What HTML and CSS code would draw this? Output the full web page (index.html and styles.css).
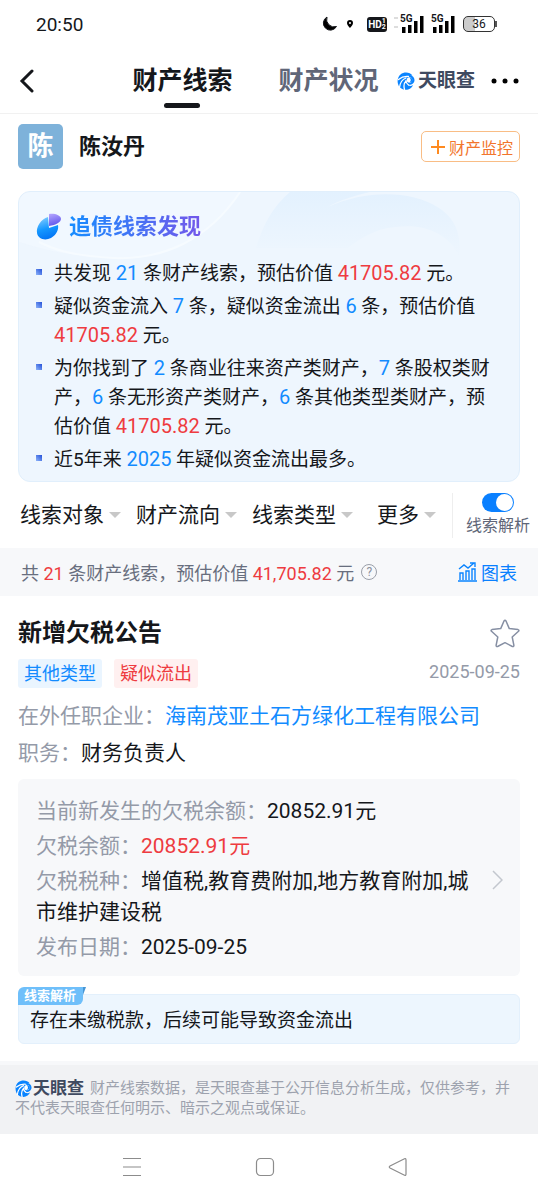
FILE: index.html
```html
<!DOCTYPE html>
<html lang="zh-CN">
<head>
<meta charset="utf-8">
<meta name="viewport" content="width=device-width, initial-scale=1">
<title>财产线索</title>
<link rel="stylesheet" href="styles.css">
</head>
<body>
<svg class="defs" aria-hidden="true">
  <symbol id="swirl" viewBox="0 0 36 36">
    <path fill="#0a84ff" d="M31 7C26 0 14-1 7 5 0 11-1 23 6 31 16 40 29 35 32 26c-4 3-9 2-11-1 7 2 14-2 14-9 0-5-4-9-9-9z"/>
    <path fill="none" stroke="#fff" stroke-width="2.600" stroke-linecap="round" d="M3 15c6-5 12-7 20-6M5 31c1-9 5-16 13-19M15 35c-2-7-1-13 3-17M18 17c0 4 2 7 5 9"/>
    <circle cx="25" cy="16" r="5.500" fill="#fff"/>
    <path fill="#0a84ff" d="M24 21c5 0 8-2 7-6-1-3-4-4-6-4 2 2 5 7-1 10z"/>
  </symbol>
</svg>

<div class="status">
  <time>20:50</time>
  <div class="status-icons">
    <svg width="15" height="16" viewBox="0 0 15 16"><path d="M5 1a7 7 0 1 0 9.500 9.500A7.500 7.500 0 0 1 5 1z" stroke="#15171b" stroke-linejoin="round"/></svg>
    <svg class="pin" width="6" height="8" viewBox="0 0 6 8"><path fill-rule="evenodd" d="M3 0a3 3 0 0 1 3 3c0 2-3 5-3 5S0 5 0 3a3 3 0 0 1 3-3zm0 2a1 1 0 1 0 0 2 1 1 0 0 0 0-2z"/></svg>
    <span class="hd">HD<span class="sup"><i>1</i><i>2</i></span></span>
    <span class="signal updown"><svg width="22" height="17" viewBox="0 0 22 17"><path d="M0 11h3.500v6H0zM6 9h3.500v8H6zM12 5h3.500v12H12zM18 0h3.500v17H18z"/></svg><b>5G</b></span>
    <span class="signal"><svg width="22" height="17" viewBox="0 0 22 17"><path d="M0 11h3.500v6H0zM6 9h3.500v8H6zM12 5h3.500v12H12zM18 0h3.500v17H18z"/></svg><b>5G</b></span>
    <span class="battery">36</span>
  </div>
</div>

<header class="nav">
  <button class="back" aria-label="返回"><svg width="16" height="24" viewBox="0 0 16 24"><path d="M13 2 3 12l10 10" fill="none" stroke="#15171b" stroke-width="3" stroke-linecap="round"/></svg></button>
  <nav class="tabs">
    <a class="tab active" href="#clues">财产线索</a>
    <a class="tab" href="#state">财产状况</a>
  </nav>
  <span class="brand"><svg class="brand-icon"><use href="#swirl"/></svg>天眼查</span>
  <button class="dots" aria-label="更多操作"><svg width="28" height="6" viewBox="0 0 28 6"><circle cx="3" cy="3" r="2.500"/><circle cx="14" cy="3" r="2.500"/><circle cx="25" cy="3" r="2.500"/></svg></button>
</header>

<section class="person">
  <span class="avatar">陈</span>
  <h1>陈汝丹</h1>
  <button class="monitor"><svg width="14" height="14" viewBox="0 0 14 14"><path d="M7 0v14M0 7h14" stroke="#ff8a1f" stroke-width="2"/></svg>财产监控</button>
</section>

<section class="found" id="clues">
  <svg class="found-art" viewBox="0 0 502 80" preserveAspectRatio="none" aria-hidden="true">
    <defs><linearGradient id="fade" x1="0" y1="0" x2="0" y2="1"><stop offset="0" stop-color="#e3f1fe"/><stop offset="1" stop-color="#eef6fe"/></linearGradient></defs>
    <path d="M0 0h222C190 48 145 68 95 66 50 64 25 58 0 50z" fill="#f4faff" opacity=".5"/>
    <path d="M222 0C190 48 145 68 95 66 60 64 40 60 20 50" fill="none" stroke="#f6fbff" stroke-width="2"/>
    <path d="M238 56C246 30 256 14 272 0h80c-16 4-30 8-42 15 40-18 84-16 110 0 20 12 24 30 22 50-10-24-36-34-64-30-22 2-36 12-48 21z" fill="url(#fade)"/>
  </svg>
  <h2><svg width="26" height="28" viewBox="0 0 26 28">
    <defs>
      <linearGradient id="pie" x1="0" y1="0" x2=".3" y2="1"><stop offset="0" stop-color="#8fd3ff"/><stop offset=".6" stop-color="#1497ff"/><stop offset="1" stop-color="#0578f5"/></linearGradient>
      <linearGradient id="slice" x1="0" y1="0" x2=".3" y2="1"><stop offset="0" stop-color="#b7a8ff"/><stop offset="1" stop-color="#6257ec"/></linearGradient>
    </defs>
    <path d="M12 4C5 6 0 14 1 20c1 6 8 8 14 5 5-3 8-8 7-13l-9 3z" fill="url(#pie)"/>
    <path d="M13 1c5-1 12 1 12 5 0 3-5 6-12 7z" fill="url(#slice)"/>
  </svg><span>追债线索发现</span></h2>
  <ul>
    <li>共发现 <em>21</em> 条财产线索，预估价值 <strong>41705.82</strong> 元。</li>
    <li>疑似资金流入 <em>7</em> 条，疑似资金流出 <em>6</em> 条，预估价值 <strong>41705.82</strong> 元。</li>
    <li>为你找到了 <em>2</em> 条商业往来资产类财产，<em>7</em> 条股权类财产，<em>6</em> 条无形资产类财产，<em>6</em> 条其他类型类财产，预估价值 <strong>41705.82</strong> 元。</li>
    <li>近5年来 <em>2025</em> 年疑似资金流出最多。</li>
  </ul>
</section>

<section class="filters">
  <div class="filter-list">
    <button class="filter">线索对象</button>
    <button class="filter">财产流向</button>
    <button class="filter">线索类型</button>
    <button class="filter">更多</button>
  </div>
  <label class="toggle"><input type="checkbox" role="switch" checked><span>线索解析</span></label>
</section>

<section class="summary">
  <p>共 <strong>21</strong> 条财产线索，预估价值 <strong>41,705.82</strong> 元</p>
  <button class="help" aria-label="说明">?</button>
  <a class="chart" href="#chart"><svg width="19" height="20" viewBox="0 0 19 20" fill="none" stroke="#0a84ff" stroke-width="1.400"><path d="M0 19h19M2 18v-7h3v7M8 18V9h3v9M14 18V7h3v11M1 7l5-4 4 3 6-5M12 1h5v4"/></svg>图表</a>
</section>

<main class="clue">
  <div class="title-row">
    <h2>新增欠税公告</h2>
    <button aria-label="收藏"><svg width="30" height="29" viewBox="0 0 30 29"><path d="M14 2q1-1.500 2 0l3.300 7.600 8.700 1q1.500.5.500 1.700L22.200 18l1.700 8.300q0 1.700-1.500 1.200L15 23.700l-7.400 3.800q-1.500.5-1.500-1.200L7.800 18l-6.300-5.700q-1-1.200.500-1.700l8.700-1z" fill="none" stroke="#868fa3" stroke-width="1.500" stroke-linejoin="round"/></svg></button>
  </div>
  <div class="tags">
    <span class="tag blue">其他类型</span>
    <span class="tag red">疑似流出</span>
    <time>2025-09-25</time>
  </div>
  <p class="field"><span>在外任职企业：</span><a href="#company">海南茂亚土石方绿化工程有限公司</a></p>
  <p class="field"><span>职务：</span>财务负责人</p>

  <div class="detail">
    <div>
      <p><span>当前新发生的欠税余额：</span>20852.91元</p>
      <p><span>欠税余额：</span><strong>20852.91元</strong></p>
      <p><span>欠税税种：</span>增值税,教育费附加,地方教育附加,城市维护建设税</p>
      <p><span>发布日期：</span>2025-09-25</p>
    </div>
    <svg width="11" height="20" viewBox="0 0 11 20"><path d="M1 1l9 9-9 9" fill="none" stroke="#c3c7ce" stroke-width="1.500"/></svg>
  </div>

  <div class="analysis">
    <span class="label">线索解析</span>
    <p>存在未缴税款，后续可能导致资金流出</p>
  </div>
</main>

<footer class="note">
  <p><span class="brand small"><svg class="brand-icon"><use href="#swirl"/></svg>天眼查</span>财产线索数据，是天眼查基于公开信息分析生成，仅供参考，并不代表天眼查任何明示、暗示之观点或保证。</p>
</footer>

<div class="system">
  <button aria-label="菜单"><svg width="20" height="20" viewBox="0 0 20 20"><path d="M1 1.500h18M1 10h18M1 18.500h18"/></svg></button>
  <button aria-label="主页"><svg width="20" height="20" viewBox="0 0 20 20"><rect x="1.500" y="1.500" width="17" height="17" rx="4"/></svg></button>
  <button aria-label="后退"><svg width="20" height="20" viewBox="0 0 20 20"><path d="M16.500 1.700 2 9q-1.500 1 0 2l14.500 7.300q1.500.5 1.500-1.300V3q0-1.800-1.500-1.300z"/></svg></button>
</div>
</body>
</html>
```
FILE: styles.css
```css
* { box-sizing: border-box; }
body {
  margin: 0;
  background: #fff;
  color: #15171b;
  font-family: Roboto, "Noto Sans CJK SC", sans-serif;
}
h1, h2, p, ul { margin: 0; padding: 0; font-weight: 400; }
button { border: 0; padding: 0; background: none; color: inherit; font: inherit; }
a { color: inherit; text-decoration: none; }
em, i { font-style: normal; }
strong { font-weight: 400; color: #ee3b40; }
svg { flex: none; display: block; }
.defs { position: absolute; width: 0; height: 0; }

.status {
  display: flex;
  align-items: center;
  justify-content: space-between;
  height: 48px;
  padding: 0 43px 0 36px;
}
.status time { font-size: 19px; }
.status-icons { display: flex; align-items: center; }
.pin { margin: 0 14px 0 10px; }
.hd {
  display: flex;
  align-items: center;
  justify-content: center;
  width: 20px;
  height: 15px;
  border-radius: 3px;
  background: #15171b;
  color: #fff;
  font-size: 10px;
  font-weight: 700;
}
.sup { display: grid; font-size: 7px; line-height: 6px; }
.signal {
  position: relative;
  display: flex;
  align-items: flex-end;
  width: 22px;
  height: 18px;
  margin-left: 9px;
}
.updown { margin-left: 15px; }
.updown::before {
  content: "";
  position: absolute;
  left: -8px;
  top: 2px;
  width: 4px;
  height: 7px;
  border: solid #ddd;
  border-width: 2px 0;
}
.signal b { position: absolute; left: -2px; top: -1px; font-size: 10px; line-height: 10px; }
.battery {
  position: relative;
  width: 32px;
  height: 16px;
  margin-left: 8px;
  border: 1px solid #333;
  border-radius: 5px;
  background: linear-gradient(90deg, #ccc 36%, #fff 36%);
  font-size: 12px;
  line-height: 14px;
  text-align: center;
}
.battery::after {
  content: "";
  position: absolute;
  right: -3px;
  top: 4px;
  width: 2px;
  height: 6px;
  background: #555;
}

.nav {
  display: flex;
  align-items: center;
  height: 66px;
  padding: 0 19px;
  border-bottom: 1px solid #f1f1f1;
}
.tabs { display: flex; gap: 46px; margin: 0 auto; padding-left: 79px; }
.tab { position: relative; color: #606678; font-size: 25px; line-height: 36px; font-weight: 700; }
.tab.active { color: #15171b; }
.tab.active::after {
  content: "";
  position: absolute;
  left: 50%;
  bottom: -9px;
  width: 36px;
  height: 5px;
  margin-left: -18px;
  border-radius: 3px;
  background: #15171b;
}
.brand { display: inline-flex; align-items: center; gap: 3px; color: #3f4a60; font-size: 19px; line-height: 24px; font-weight: 700; }
.brand-icon { width: 18px; height: 18px; }
.dots { margin-left: 16px; }

.person { display: flex; align-items: center; gap: 16px; padding: 10px 18px 22px; }
.avatar {
  width: 45px;
  height: 45px;
  border-radius: 5px;
  background: #7eb2da;
  color: #fff;
  font-size: 26px;
  line-height: 45px;
  font-weight: 700;
  text-align: center;
}
.person h1 { font-size: 22px; line-height: 32px; font-weight: 700; }
.monitor {
  display: flex;
  align-items: center;
  gap: 4px;
  height: 31px;
  margin-left: auto;
  padding: 0 6px 0 9px;
  border: 1px solid #f9bd85;
  border-radius: 5px;
  color: #f2752c;
  font-size: 16px;
}

.found {
  position: relative;
  margin: 0 18px;
  padding: 19px 17px 3px;
  border: 1px solid #e1effc;
  border-radius: 12px;
  background: #eef6fe;
  overflow: hidden;
}
.found-art { position: absolute; left: 0; top: 0; width: 100%; height: 80px; }
.found h2 { position: relative; display: flex; align-items: center; gap: 7px; margin-bottom: 16px; }
.found h2 span {
  background: linear-gradient(90deg, #168dff, #7357ea);
  background-clip: text;
  color: transparent;
  font-size: 22px;
  line-height: 32px;
  font-weight: 700;
}
.found ul { position: relative; list-style: none; }
.found li { position: relative; padding-left: 18px; margin-bottom: 4px; font-size: 19px; line-height: 29px; }
.found li::before {
  content: "";
  position: absolute;
  left: 0;
  top: 10px;
  width: 6px;
  height: 6px;
  background: linear-gradient(45deg, #8db4fa, #2450d8);
}
.found em, .found strong { font-size: 20px; line-height: 20px; }
.found em { color: #128bff; }

.filters { display: flex; align-items: center; height: 66px; padding: 0 8px 0 20px; }
.filter-list { flex: 1; display: flex; gap: 15px; padding-right: 16px; }
.filter { display: flex; align-items: center; gap: 5px; font-size: 21px; line-height: 30px; }
.filter:last-child { margin-left: auto; }
.filter::after {
  content: "";
  border: solid transparent;
  border-width: 6px 6px 0;
  border-top-color: #c8c8c8;
}
.toggle {
  display: flex;
  flex-direction: column;
  align-items: center;
  gap: 2px;
  padding-left: 13px;
  border-left: 1px solid #eee;
  color: #606678;
  font-size: 16px;
  line-height: 24px;
}
.toggle input {
  appearance: none;
  display: flex;
  justify-content: flex-end;
  width: 32px;
  height: 19px;
  margin: 0;
  padding: 1px;
  border-radius: 10px;
  background: #0a80ff;
}
.toggle input::before { content: ""; width: 17px; height: 17px; border-radius: 50%; background: #fff; }
.toggle input:not(:checked) { justify-content: flex-start; background: #ccc; }

.summary {
  display: flex;
  align-items: center;
  height: 48px;
  padding: 0 21px;
  background: #f7f8fa;
  color: #686e7e;
  font-size: 18px;
}
.help {
  width: 16px;
  height: 16px;
  margin-left: 7px;
  border: 1px solid #9a9fa9;
  border-radius: 50%;
  color: #8c929e;
  font-size: 12px;
  line-height: 14px;
}
.chart { display: flex; align-items: center; gap: 4px; margin-left: auto; color: #0a80ff; }

.clue { padding: 19px 18px 17px; }
.title-row { display: flex; align-items: center; justify-content: space-between; }
.title-row h2 { font-size: 24px; line-height: 36px; font-weight: 700; }
.tags { display: flex; gap: 12px; margin: 8px 0 12px; font-size: 18px; line-height: 29px; }
.tag { padding: 0 6px; border-radius: 3px; }
.blue { background: #eaf5ff; color: #128bff; }
.red { background: #fff0f0; color: #ee3b40; }
.tags time { margin-left: auto; color: #949aa8; line-height: 26px; }
.field { margin-bottom: 5px; font-size: 21px; line-height: 32px; }
.field span, .detail span { color: #949aa8; }
.field a { color: #128bff; }

.detail {
  display: flex;
  align-items: center;
  gap: 20px;
  margin-top: 10px;
  padding: 17px 17px 13px 18px;
  border-radius: 6px;
  background: #f7f8fa;
  font-size: 21px;
  line-height: 31px;
}
.detail > div { flex: 1; }
.detail p + p { margin-top: 4px; }

.analysis { position: relative; margin-top: 18px; padding: 11px 11px 8px; border: 1px solid #e3f0fc; border-radius: 6px; background: #edf6fe; }
.analysis p { font-size: 19px; line-height: 29px; }
.label {
  position: absolute;
  left: -1px;
  top: -8px;
  height: 18px;
  padding: 0 7px 0 6px;
  border-radius: 6px 0 6px 0;
  background: #6fbffa;
  color: #fff;
  font-size: 13px;
  line-height: 18px;
  font-weight: 700;
}
.label::after {
  content: "";
  position: absolute;
  left: 100%;
  top: 0;
  border: solid transparent;
  border-width: 8px 3px 0 0;
  border-top-color: #4796d5;
}

.note { padding: 13px 15px 16px; border-top: 4px solid #f7f8fa; background: #f1f2f4; color: #9da2ae; font-size: 15px; line-height: 20px; }
.small { gap: 1px; margin-right: 6px; font-size: 17px; line-height: 20px; vertical-align: top; }
.small .brand-icon { width: 17px; height: 17px; }

.system { display: flex; justify-content: space-between; padding: 23px 130px 22px 122px; }
.system svg { fill: none; stroke: #8c8c8c; stroke-width: 1.2; }
```
